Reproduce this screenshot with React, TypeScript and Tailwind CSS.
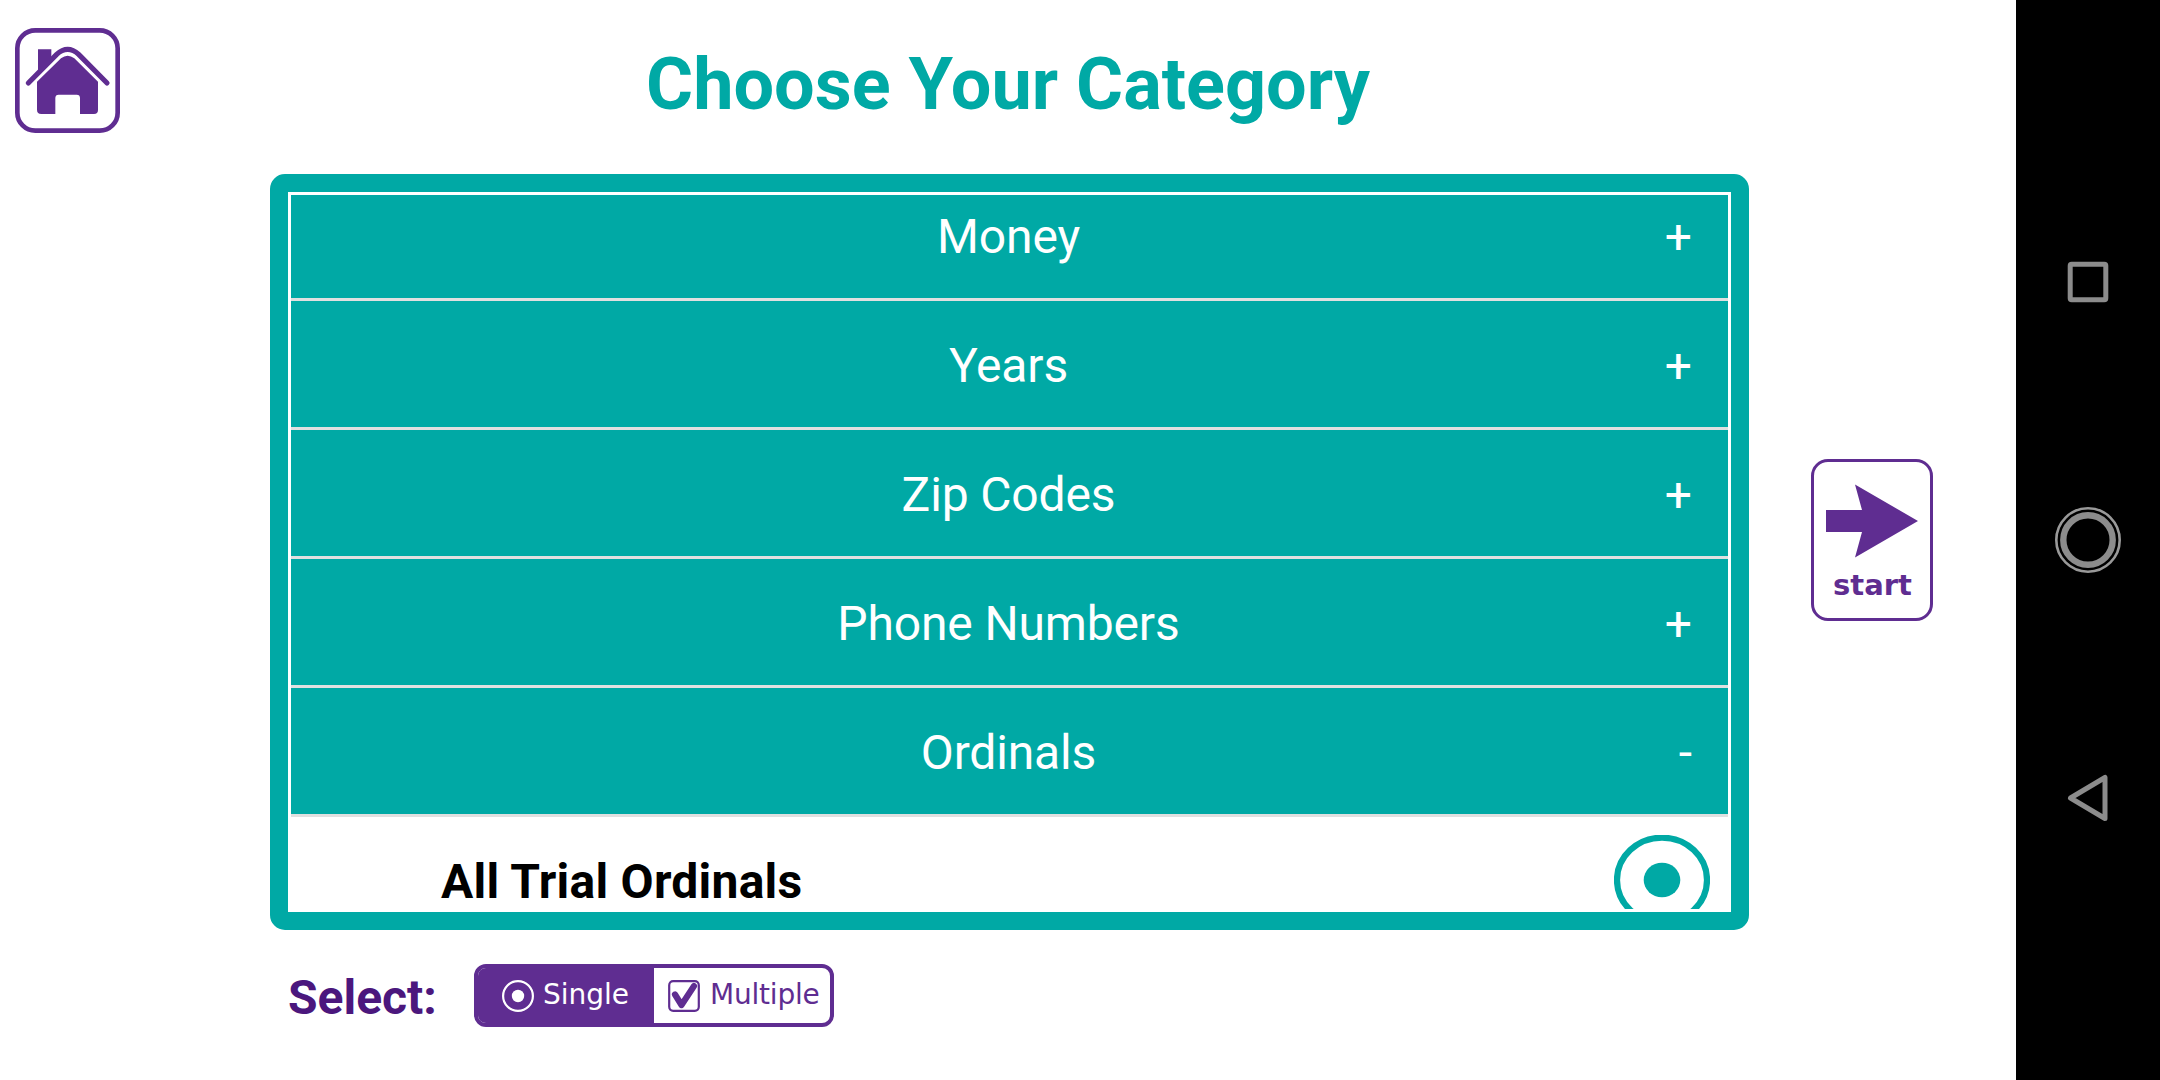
type Category = { name: string; open?: boolean };

const categories: Category[] = [
  { name: 'Money' },
  { name: 'Years' },
  { name: 'Zip Codes' },
  { name: 'Phone Numbers' },
  { name: 'Ordinals', open: true },
];

function HomeIcon() {
  return (
    <svg width="105" height="105" viewBox="45 54 315 315" aria-label="Home">
      <rect x="52" y="61" width="301" height="301" rx="54" fill="#fff" stroke="#5f2d91" strokeWidth="14" />
      <path d="M114 118H154V150L114 190Z" fill="#5f2d91" />
      <path
        d="M111 215L183 145Q203 130 223 145L294 215V300Q294 312 282 312H240V264Q240 254 230 254H176Q166 254 166 264V312H124Q111 312 111 299Z"
        fill="#5f2d91"
      />
      <path
        d="M85 219L170 133Q203 103 236 133L321 219"
        fill="none"
        stroke="#5f2d91"
        strokeWidth="15.5"
        strokeLinecap="round"
      />
    </svg>
  );
}

function CategoryRow({ name, open }: Category) {
  return (
    <div className="grid h-[129px] shrink-0 grid-cols-[1fr_auto_1fr] items-center border-b-3 border-[#e0e0e0] bg-[#00a9a5] pt-[3px] pr-9 text-[48px] leading-[56px] text-white">
      <span className="col-start-2 translate-x-[17px] tracking-[-0.15px]">{name}</span>
      <span className="text-right">{open ? '-' : '+'}</span>
    </div>
  );
}

function StartButton() {
  return (
    <button className="flex h-[162px] w-[122px] flex-col items-center rounded-[17px] border-[3px] border-[#5f2d91] bg-white pt-[22px] text-[#5f2d91]">
      <svg width="92" height="74" viewBox="0 0 92 74" fill="currentColor">
        <path d="M0 26H36L29 0.5L92 37L29 73.5L36 48H0Z" />
      </svg>
      <span className="mt-[10px] pl-px font-['DejaVu_Sans'] text-[29px] leading-[34px] font-bold">start</span>
    </button>
  );
}

function SelectToggle() {
  return (
    <div className="flex h-[63px] w-[360px] overflow-hidden rounded-[12px] border-[4px] border-[#5f2d91] bg-white font-['DejaVu_Sans'] text-[28px] leading-[34px]">
      <div className="flex w-[176px] items-start bg-[#5f2d91] pt-[10px] pl-[24px] text-white">
        <svg width="32" height="32" viewBox="0 0 32 32" className="mt-[2px]">
          <circle cx="16" cy="16" r="14.9" fill="none" stroke="#fff" strokeWidth="2.2" />
          <circle cx="16" cy="16" r="6.2" fill="#fff" />
        </svg>
        <span className="ml-[9px]">Single</span>
      </div>
      <div className="flex items-start pt-[10px] pl-[14px] text-[#5f2d91]">
        <svg width="32" height="32" viewBox="0 0 32 32" className="mt-[2px]">
          <rect x="1.2" y="1.2" width="29.6" height="29.6" rx="4" fill="none" stroke="currentColor" strokeWidth="2.2" />
          <path
            d="M7 14.5L13.5 25L26 6"
            fill="none"
            stroke="currentColor"
            strokeWidth="6.2"
            strokeLinecap="round"
            strokeLinejoin="round"
          />
        </svg>
        <span className="ml-[10px] tracking-[-0.2px]">Multiple</span>
      </div>
    </div>
  );
}

function NavBar() {
  return (
    <nav className="flex h-full w-[144px] flex-col items-center bg-black pt-[249px]">
      <svg width="66" height="66" viewBox="0 0 66 66" fill="none" stroke="#8c8c8c" strokeWidth="5">
        <rect x="15.2" y="15.2" width="35.6" height="35.6" rx="1.5" />
      </svg>
      <svg width="66" height="66" viewBox="0 0 66 66" fill="none" className="mt-[192px]">
        <circle cx="33" cy="33" r="31.7" stroke="#999" strokeWidth="2.6" />
        <circle cx="33" cy="33" r="24.7" stroke="#8c8c8c" strokeWidth="6.4" />
      </svg>
      <svg
        width="66"
        height="66"
        viewBox="0 0 66 66"
        fill="none"
        stroke="#8c8c8c"
        strokeWidth="5"
        strokeLinejoin="round"
        className="mt-[192px]"
      >
        <path d="M50 12.5V53.5L15.5 33Z" />
      </svg>
    </nav>
  );
}

export default function App() {
  return (
    <div className="flex h-[1080px] w-[2160px] overflow-hidden bg-white font-[Roboto,sans-serif]">
      <main className="flex w-[2016px] flex-col">
        <header className="grid h-[174px] grid-cols-[270px_1476px_1fr]">
          <div className="pt-7 pl-[15px]">
            <HomeIcon />
          </div>
          <h1 className="pt-[43px] text-center text-[72px] leading-[84px] font-bold text-[#00a9a5]">
            Choose Your Category
          </h1>
        </header>
        <div className="flex h-[756px] pl-[270px]">
          <section className="w-[1479px] rounded-[15px] border-[18px] border-[#00a9a5] bg-[#00a9a5]">
            <div className="flex h-[720px] flex-col overflow-hidden border-3 border-white bg-white">
              <div className="-mt-[23px] flex flex-col">
                {categories.map((c) => (
                  <CategoryRow key={c.name} {...c} />
                ))}
                <div className="flex h-[129px] items-start justify-between bg-white pt-[18px] pr-[18px] pl-[150px] text-[48px] leading-[56px] font-bold text-black">
                  <span className="pt-[19px] tracking-[0.25px]">All Trial Ordinals</span>
                  <svg width="96" height="92" viewBox="0 0 96 92">
                    <ellipse cx="48" cy="45" rx="45" ry="42.3" fill="none" stroke="#00a9a5" strokeWidth="6.2" />
                    <ellipse cx="48" cy="45" rx="18.3" ry="17.3" fill="#00a9a5" />
                  </svg>
                </div>
              </div>
            </div>
          </section>
          <div className="pt-[285px] pl-[62px]">
            <StartButton />
          </div>
        </div>
        <footer className="flex pt-[34px] pl-[288px]">
          <span className="w-[186px] pt-[6px] text-[48px] leading-[56px] font-bold text-[#4b177d]">Select:</span>
          <SelectToggle />
        </footer>
      </main>
      <NavBar />
    </div>
  );
}
